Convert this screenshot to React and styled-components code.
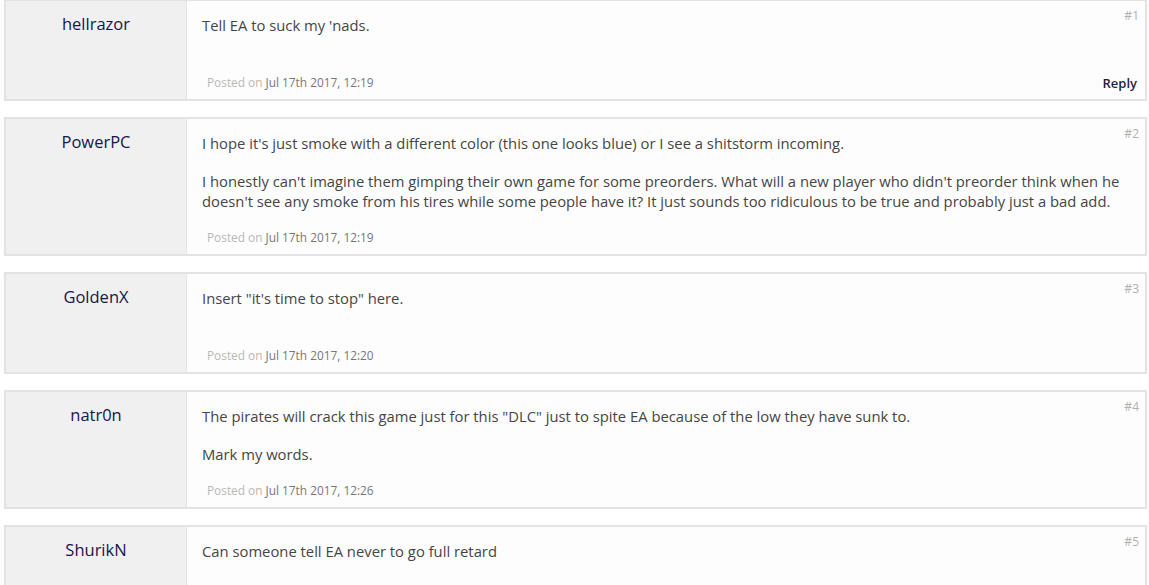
import React from "react";
import styled, { createGlobalStyle } from "styled-components";

const GlobalStyle = createGlobalStyle`
  body {
    margin: 0;
    background: #ffffff;
    font-family: "Open Sans", "Liberation Sans", sans-serif;
  }
`;

const posts = [
  {
    id: 1,
    user: "hellrazor",
    body: ["Tell EA to suck my 'nads."],
    date: "Jul 17th 2017, 12:19",
    reply: true,
  },
  {
    id: 2,
    user: "PowerPC",
    body: [
      "I hope it's just smoke with a different color (this one looks blue) or I see a shitstorm incoming.",
      "I honestly can't imagine them gimping their own game for some preorders. What will a new player who didn't preorder think when he doesn't see any smoke from his tires while some people have it? It just sounds too ridiculous to be true and probably just a bad add.",
    ],
    date: "Jul 17th 2017, 12:19",
  },
  {
    id: 3,
    user: "GoldenX",
    body: ["Insert \"it's time to stop\" here."],
    date: "Jul 17th 2017, 12:20",
  },
  {
    id: 4,
    user: "natr0n",
    body: [
      "The pirates will crack this game just for this \"DLC\" just to spite EA because of the low they have sunk to.",
      "Mark my words.",
    ],
    date: "Jul 17th 2017, 12:26",
  },
  {
    id: 5,
    user: "ShurikN",
    body: ["Can someone tell EA never to go full retard"],
    date: "Jul 17th 2017, 12:31",
  },
];

export default function App() {
  return (
    <>
      <GlobalStyle />
      <Thread>
        {posts.map((p) => (
          <Post key={p.id}>
            <Author>{p.user}</Author>
            <Content>
              <PostNum>#{p.id}</PostNum>
              <Message>
                {p.body.map((para, i) => (
                  <Para key={i}>{para}</Para>
                ))}
              </Message>
              <Footer>
                <Posted>
                  Posted on <DateText>{p.date}</DateText>
                </Posted>
                {p.reply && <ReplyLink>Reply</ReplyLink>}
              </Footer>
            </Content>
          </Post>
        ))}
      </Thread>
    </>
  );
}

const Thread = styled.div`
  display: flex;
  flex-direction: column;
  gap: 16px;
  padding: 0 2px 0 4px;
  margin-top: -1px;
`;

const Post = styled.div`
  display: flex;
  min-height: 98px;
  border: 2px solid #e3e3e3;
  background: #fdfdfd;
`;

const Author = styled.div`
  width: 180px;
  flex-shrink: 0;
  background: #f0f0f0;
  border-right: 1px solid #e6e6e6;
  text-align: center;
  padding-top: 11px;
  font-size: 16.5px;
  font-weight: 400;
  color: #16164f;
`;

const Content = styled.div`
  position: relative;
  flex: 1;
  display: flex;
  flex-direction: column;
  padding: 14px 8px 8px 15px;
`;

const PostNum = styled.span`
  position: absolute;
  top: 6px;
  right: 6px;
  font-size: 12px;
  color: #b0b0b0;
`;

const Message = styled.div`
  flex: 1;
  font-size: 14.8px;
  line-height: 20px;
  color: #454545;
`;

const Para = styled.p`
  margin: 0 0 18px;
  &:last-child {
    margin-bottom: 0;
  }
`;

const Footer = styled.div`
  display: flex;
  align-items: center;
  justify-content: space-between;
  height: 17px;
  line-height: 17px;
  padding: 18px 0 0 5px;
`;

const Posted = styled.span`
  font-size: 11.85px;
  color: #b8b8b8;
`;

const DateText = styled.span`
  color: #777777;
`;

const ReplyLink = styled.a`
  font-size: 13px;
  font-weight: 600;
  color: #1f1f3a;
  cursor: pointer;
  margin-top: 2px;
`;
